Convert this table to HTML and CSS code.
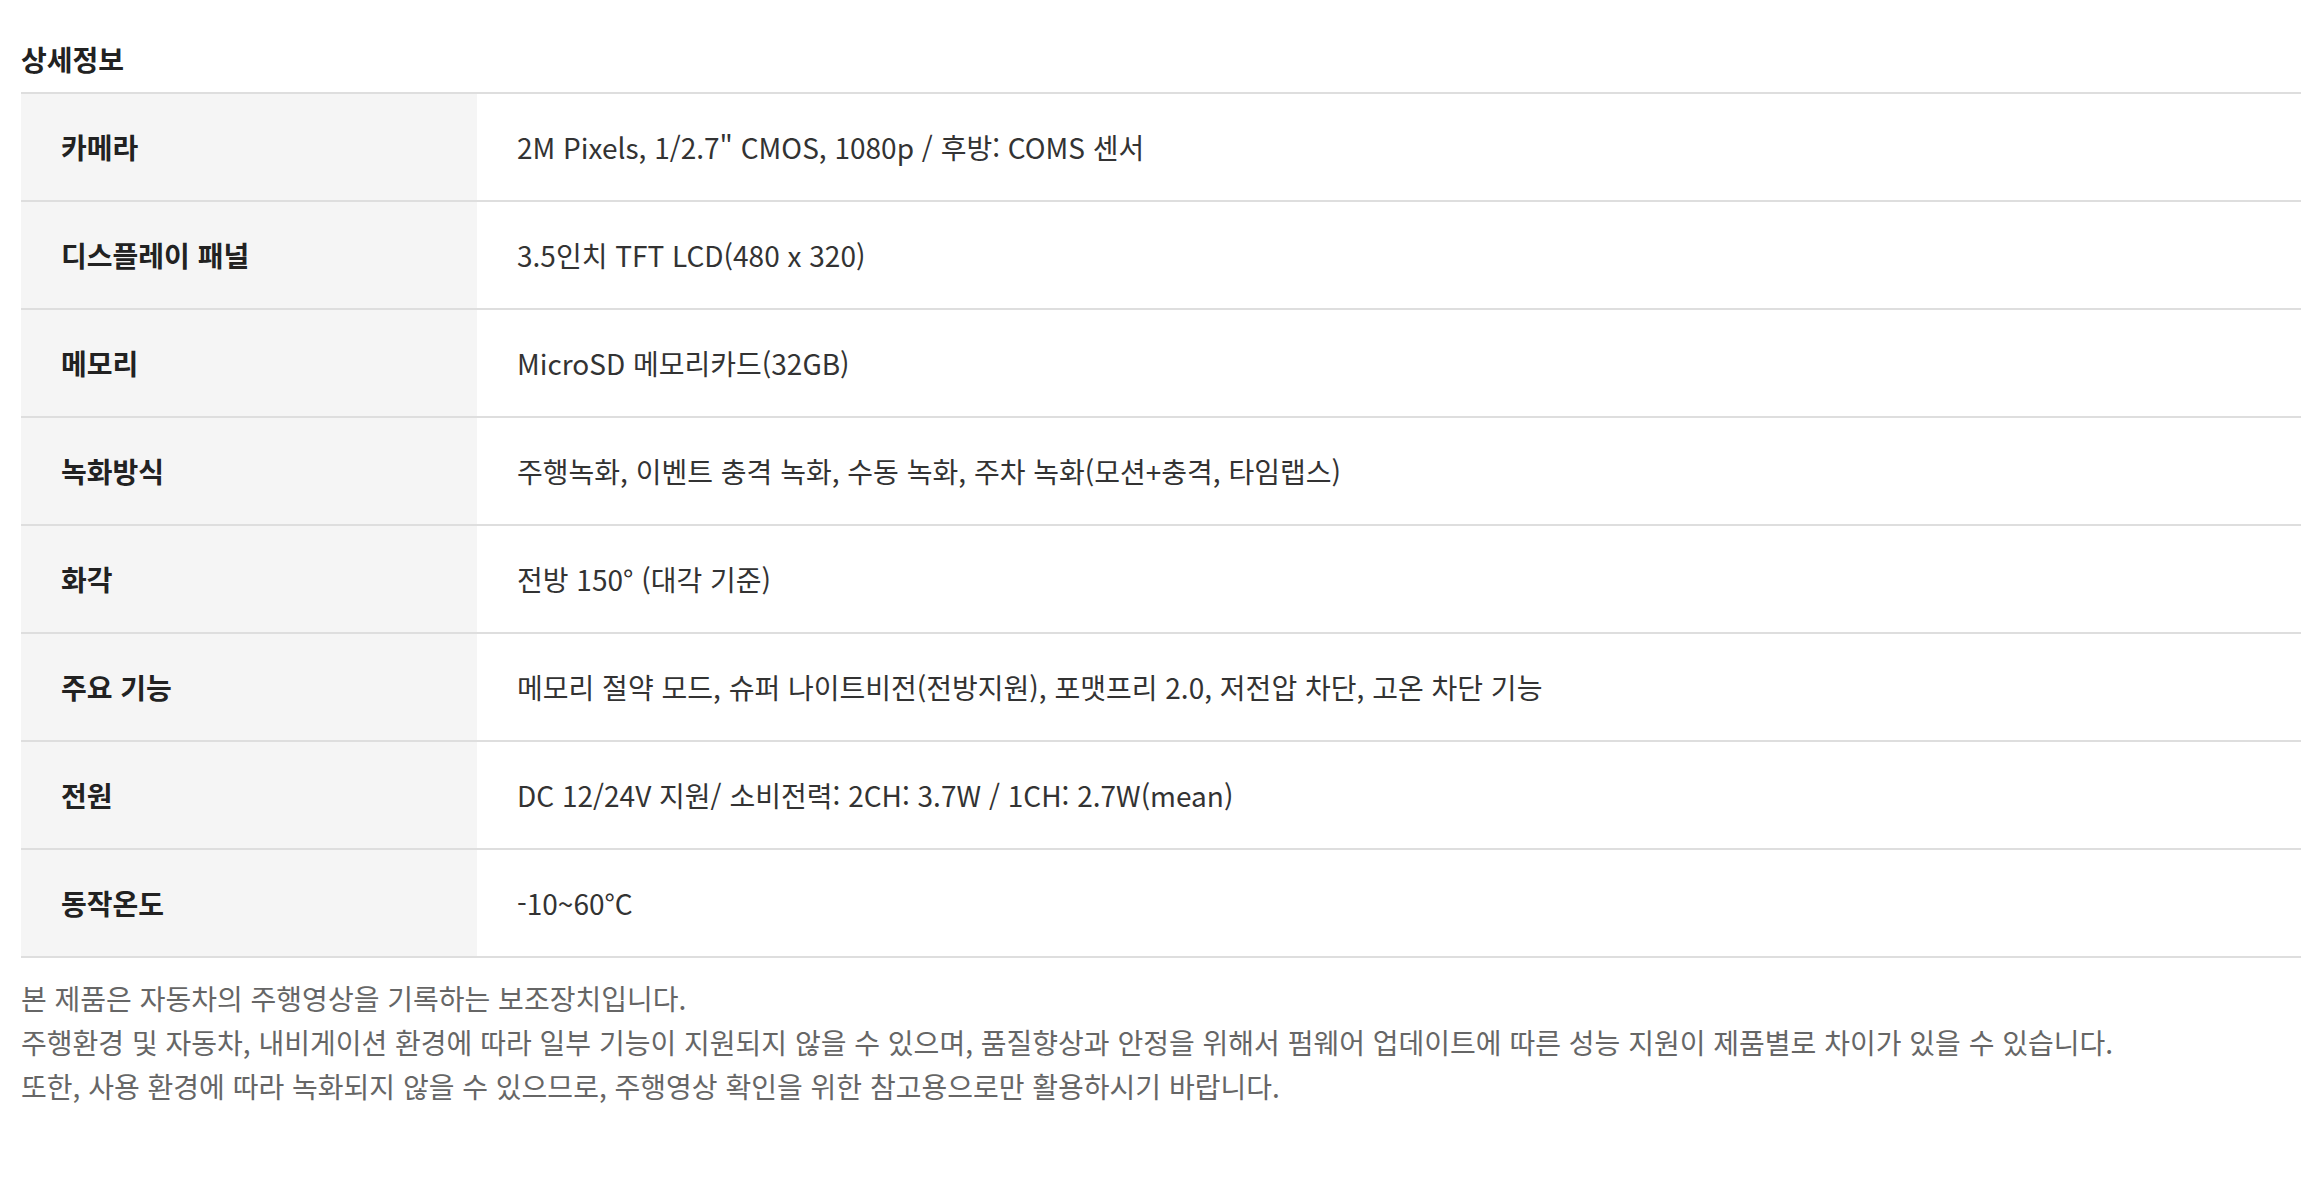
FILE: index.html
```html
<!DOCTYPE html>
<html lang="ko">
<head>
<meta charset="utf-8">
<title>상세정보</title>
<link rel="stylesheet" href="styles.css">
</head>
<body>
<section class="spec">
  <h3 class="spec-title">상세정보</h3>
  <table class="spec-table">
    <tbody>
      <tr><th>카메라</th><td>2M Pixels, 1/2.7" CMOS, 1080p / 후방: COMS 센서</td></tr>
      <tr><th>디스플레이 패널</th><td>3.5인치 TFT LCD(480 x 320)</td></tr>
      <tr><th>메모리</th><td>MicroSD 메모리카드(32GB)</td></tr>
      <tr><th>녹화방식</th><td>주행녹화, 이벤트 충격 녹화, 수동 녹화, 주차 녹화(모션+충격, 타임랩스)</td></tr>
      <tr><th>화각</th><td>전방 150° (대각 기준)</td></tr>
      <tr><th>주요 기능</th><td>메모리 절약 모드, 슈퍼 나이트비전(전방지원), 포맷프리 2.0, 저전압 차단, 고온 차단 기능</td></tr>
      <tr><th>전원</th><td>DC 12/24V 지원/ 소비전력: 2CH: 3.7W / 1CH: 2.7W(mean)</td></tr>
      <tr><th>동작온도</th><td>-10~60°C</td></tr>
    </tbody>
  </table>
  <div class="spec-notes">
    <p>본 제품은 자동차의 주행영상을 기록하는 보조장치입니다.</p>
    <p>주행환경 및 자동차, 내비게이션 환경에 따라 일부 기능이 지원되지 않을 수 있으며, 품질향상과 안정을 위해서 펌웨어 업데이트에 따른 성능 지원이 제품별로 차이가 있을 수 있습니다.</p>
    <p>또한, 사용 환경에 따라 녹화되지 않을 수 있으므로, 주행영상 확인을 위한 참고용으로만 활용하시기 바랍니다.</p>
  </div>
</section>
</body>
</html>
```

FILE: styles.css
```css
html, body {
  margin: 0;
  padding: 0;
  background: #fff;
}

body {
  font-family: "Noto Sans CJK KR", "Noto Sans", sans-serif;
  color: #333;
}

.spec {
  padding: 39px 15px 40px 21px;
}

.spec-title {
  margin: 0 0 13px;
  font-size: 28px;
  line-height: 40px;
  font-weight: 700;
  color: #222;
}

.spec-table {
  width: 100%;
  border-collapse: collapse;
  border-top: 2px solid #dedede;
}

.spec-table tr {
  border-bottom: 2px solid #dedede;
}

.spec-table th,
.spec-table td {
  height: 108px;
  padding: 0 40px;
  font-size: 28px;
  line-height: 40px;
  vertical-align: middle;
  text-align: left;
  box-sizing: border-box;
}

.spec-table th {
  width: 20%;
  background: #f5f5f5;
  font-weight: 700;
  color: #222;
}

.spec-table td {
  font-weight: 400;
  color: #333;
}

.spec-notes {
  margin-top: 18px;
}

.spec-notes p {
  margin: 0;
  font-size: 28px;
  line-height: 44px;
  color: #666;
}
```
